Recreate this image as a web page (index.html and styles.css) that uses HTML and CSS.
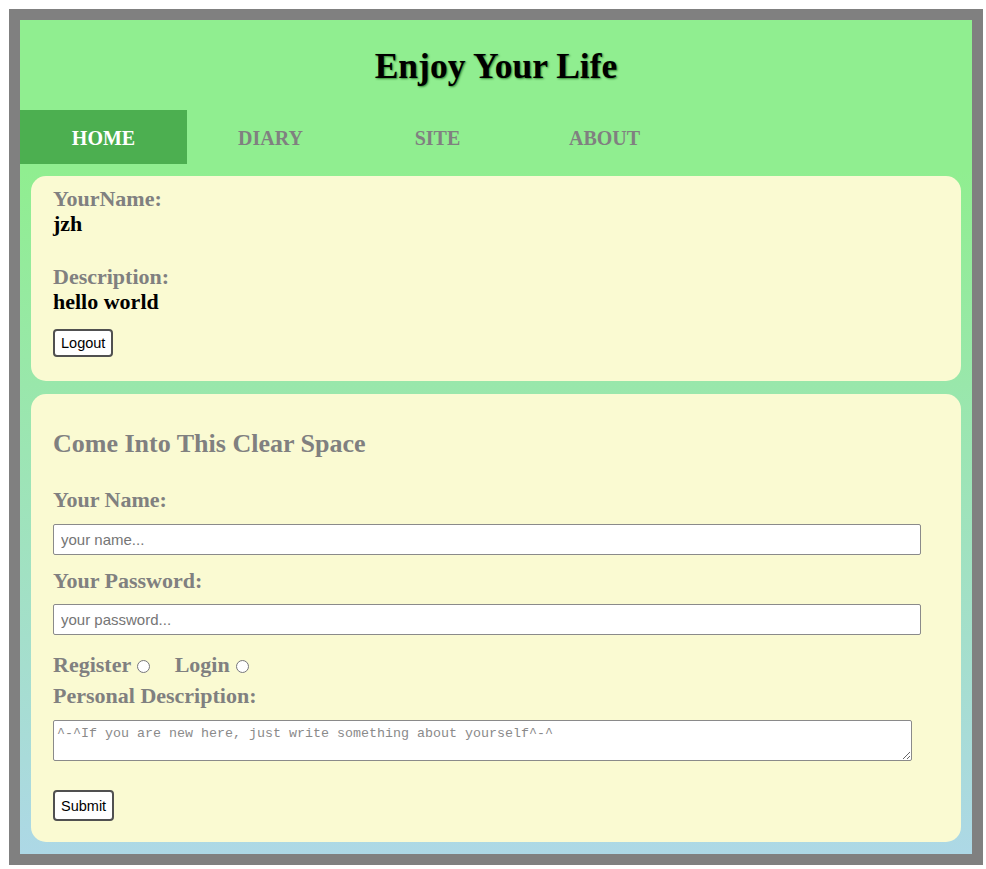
FILE: index.html
```html
<!DOCTYPE html>
<html lang="en">
<head>
<meta charset="utf-8">
<title>Enjoy Your Life</title>
<link rel="stylesheet" href="styles.css">
</head>
<body>
<div class="frame">
  <header class="header">
    <h1 class="title">Enjoy Your Life</h1>
  </header>
  <nav class="nav">
    <a class="nav-item active" href="#">HOME</a>
    <a class="nav-item" href="#">DIARY</a>
    <a class="nav-item" href="#">SITE</a>
    <a class="nav-item" href="#">ABOUT</a>
  </nav>
  <section class="card card-user">
    <div class="label">YourName:</div>
    <div class="value">jzh</div>
    <div class="label label-gap">Description:</div>
    <div class="value">hello world</div>
    <button class="btn btn-logout" type="button">Logout</button>
  </section>
  <section class="card card-form">
    <h2 class="form-title">Come Into This Clear Space</h2>
    <div class="label label-name">Your Name:</div>
    <input class="field field-name" type="text" placeholder="your name...">
    <div class="label label-pass">Your Password:</div>
    <input class="field field-pass" type="password" placeholder="your password...">
    <div class="label radios">
      <label class="radio-label">Register<input class="radio" type="radio" name="mode"></label>
      <label class="radio-label radio-login">Login<input class="radio" type="radio" name="mode"></label>
    </div>
    <div class="label label-desc">Personal Description:</div>
    <textarea class="desc" placeholder="^-^If you are new here, just write something about yourself^-^"></textarea>
    <div class="submit-row"><button class="btn btn-submit" type="button">Submit</button></div>
  </section>
</div>
</body>
</html>
```
FILE: styles.css
```css
html, body {
  margin: 0;
  padding: 0;
  background: #ffffff;
}

body {
  font-family: "Liberation Serif", "Times New Roman", serif;
}

.frame {
  box-sizing: border-box;
  margin: 9px 0 0 9px;
  width: 974px;
  height: 856px;
  border: 11px solid #808080;
  background: linear-gradient(to bottom, #90ee90 0%, #90ee90 18%, #add8e6 100%);
  display: flex;
  flex-direction: column;
}

.header {
  padding: 26px 0 24px;
  text-align: center;
}

.title {
  margin: 0;
  font-size: 35.5px;
  line-height: 40px;
  font-weight: bold;
  color: #000000;
  text-shadow: 1px 1px 2px rgba(30, 110, 30, 0.8);
}

.nav {
  display: flex;
  height: 54px;
}

.nav-item {
  box-sizing: border-box;
  width: 167px;
  height: 54px;
  padding-top: 2px;
  line-height: 52px;
  text-align: center;
  font-size: 20px;
  font-weight: bold;
  color: #808080;
  text-decoration: none;
}

.nav-item.active {
  background: #4caf50;
  color: #ffffff;
}

.card {
  margin: 0 11px;
  background: #fafad2;
  border-radius: 15px;
  display: flex;
  flex-direction: column;
  align-items: flex-start;
}

.card-user {
  margin-top: 12px;
  padding: 10px 22px 24px;
}

.card-form {
  margin-top: 13px;
  padding: 35px 22px 21px;
}

.label {
  font-size: 22px;
  line-height: 25px;
  font-weight: bold;
  color: #808080;
}

.value {
  font-size: 22px;
  line-height: 25px;
  font-weight: bold;
  color: #000000;
}

.label-gap {
  margin-top: 28px;
}

.btn {
  box-sizing: border-box;
  font-family: "Liberation Sans", Arial, sans-serif;
  font-size: 14.5px;
  color: #000000;
  background: #ffffff;
  border: 2px solid #505050;
  border-radius: 4px;
  padding: 0 6px;
  cursor: pointer;
}

.btn-logout {
  margin-top: 15px;
  height: 28px;
}

.form-title {
  margin: 0;
  font-size: 26px;
  line-height: 30px;
  font-weight: bold;
  color: #808080;
}

.label-name {
  margin-top: 28px;
}

.field {
  box-sizing: border-box;
  width: 868px;
  height: 31px;
  margin-top: 12px;
  padding: 0 7px;
  border: 1px solid #8a8a8a;
  border-radius: 2px;
  background: #ffffff;
  font-family: "Liberation Sans", Arial, sans-serif;
  font-size: 15px;
}

.field::placeholder {
  color: #757575;
}

.field-pass {
  margin-top: 11px;
}

.label-pass {
  margin-top: 13px;
}

.radios {
  margin-top: 17px;
}

.radio-label {
  display: inline;
}

.radio {
  margin: 0 0 0 6px;
  width: 13px;
  height: 13px;
  vertical-align: -1px;
}

.radio-login {
  margin-left: 19px;
}

.label-desc {
  margin-top: 6px;
}

.desc {
  box-sizing: border-box;
  width: 859px;
  height: 41px;
  margin-top: 12px;
  padding: 5px 3px 2px;
  border: 1px solid #8a8a8a;
  border-radius: 2px;
  background: #ffffff;
  font-family: "Liberation Mono", "Courier New", monospace;
  font-size: 13.33px;
  resize: both;
}

.desc::placeholder {
  color: #8a8a8a;
}

.submit-row {
  margin-top: 29px;
}

.btn-submit {
  height: 31px;
}
```
